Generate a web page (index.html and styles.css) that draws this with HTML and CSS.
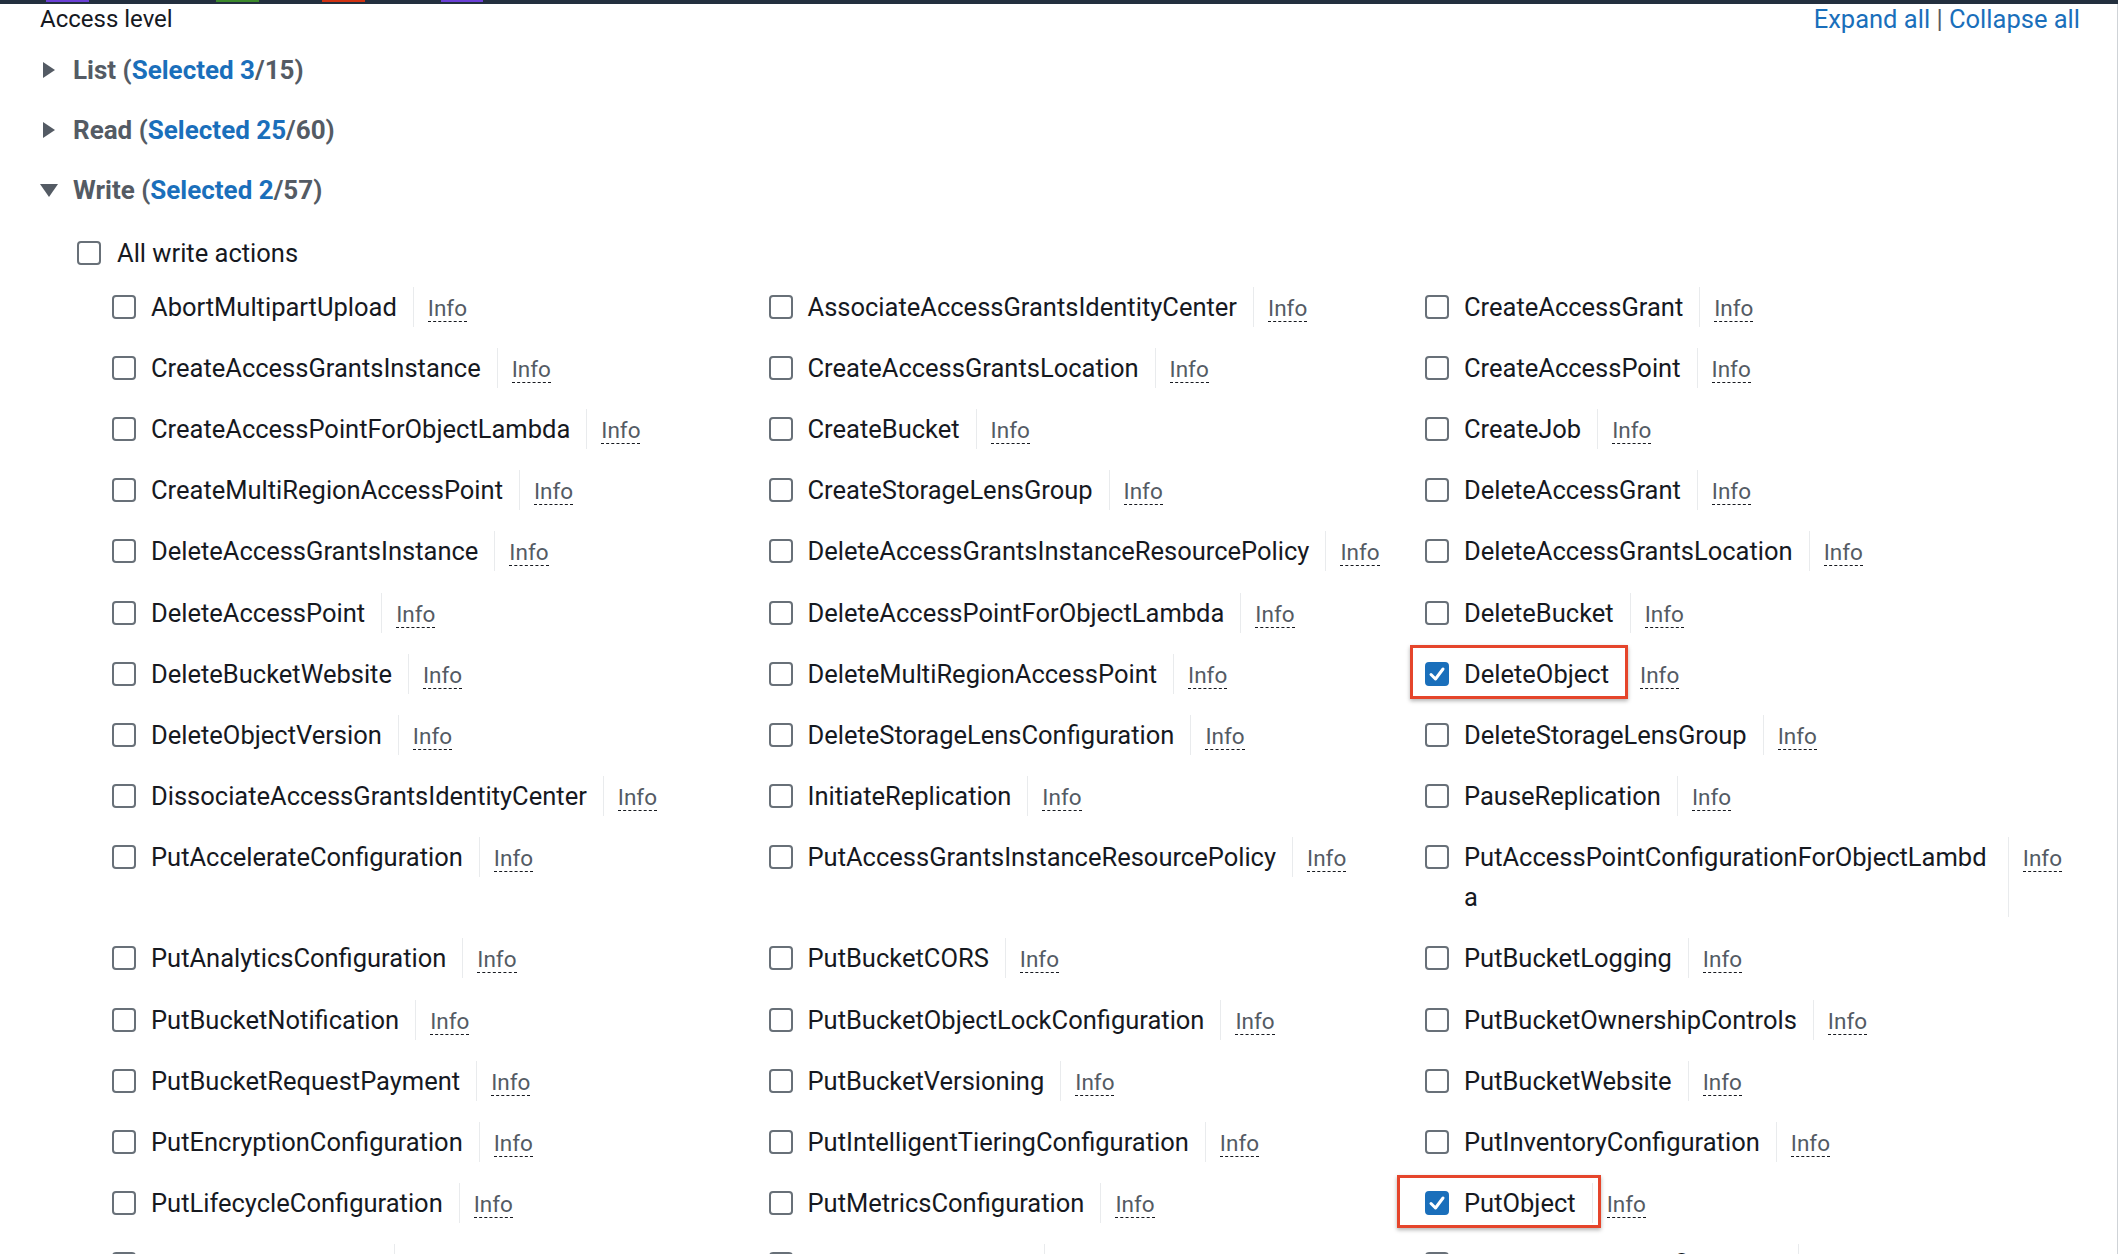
FILE: index.html
```html
<!DOCTYPE html>
<html lang="en">
<head>
<meta charset="utf-8">
<title>Access level</title>
<link rel="stylesheet" href="styles.css">
</head>
<body>
<div class="topbar">
  <span class="seg seg-a"></span><span class="seg seg-b"></span><span class="seg seg-c"></span><span class="seg seg-d"></span>
</div>
<div class="page">
  <div class="header">
    <span class="title">Access level</span>
    <span class="links"><a class="link">Expand all</a> <span class="pipe">|</span> <a class="link">Collapse all</a></span>
  </div>

  <div class="level first">
    <svg class="caret" width="18" height="18" viewBox="0 0 18 18"><polygon points="3,1 15,9 3,17" fill="#545b64"/></svg>
    <span>List (<span class="sel">Selected 3</span>/15)</span>
  </div>
  <div class="level">
    <svg class="caret" width="18" height="18" viewBox="0 0 18 18"><polygon points="3,1 15,9 3,17" fill="#545b64"/></svg>
    <span>Read (<span class="sel">Selected 25</span>/60)</span>
  </div>
  <div class="level">
    <svg class="caret" width="18" height="18" viewBox="0 0 18 18"><polygon points="0,3 18,3 9,16" fill="#545b64"/></svg>
    <span>Write (<span class="sel">Selected 2</span>/57)</span>
  </div>

  <div class="all">
    <span class="cb"></span>
    <span>All write actions</span>
  </div>

  <div class="grid" id="grid"></div>
</div>
<script src="app.js"></script>
</body>
</html>
```

FILE: app.js
```js
(function () {
  var actions = [
    "AbortMultipartUpload", "AssociateAccessGrantsIdentityCenter", "CreateAccessGrant",
    "CreateAccessGrantsInstance", "CreateAccessGrantsLocation", "CreateAccessPoint",
    "CreateAccessPointForObjectLambda", "CreateBucket", "CreateJob",
    "CreateMultiRegionAccessPoint", "CreateStorageLensGroup", "DeleteAccessGrant",
    "DeleteAccessGrantsInstance", "DeleteAccessGrantsInstanceResourcePolicy", "DeleteAccessGrantsLocation",
    "DeleteAccessPoint", "DeleteAccessPointForObjectLambda", "DeleteBucket",
    "DeleteBucketWebsite", "DeleteMultiRegionAccessPoint", "DeleteObject",
    "DeleteObjectVersion", "DeleteStorageLensConfiguration", "DeleteStorageLensGroup",
    "DissociateAccessGrantsIdentityCenter", "InitiateReplication", "PauseReplication",
    "PutAccelerateConfiguration", "PutAccessGrantsInstanceResourcePolicy", "PutAccessPointConfigurationForObjectLambda",
    "PutAnalyticsConfiguration", "PutBucketCORS", "PutBucketLogging",
    "PutBucketNotification", "PutBucketObjectLockConfiguration", "PutBucketOwnershipControls",
    "PutBucketRequestPayment", "PutBucketVersioning", "PutBucketWebsite",
    "PutEncryptionConfiguration", "PutIntelligentTieringConfiguration", "PutInventoryConfiguration",
    "PutLifecycleConfiguration", "PutMetricsConfiguration", "PutObject",
    "PutObjectLegalHold", "PutObjectRetention", "PutReplicationConfiguration"
  ];
  var marked = { "DeleteObject": "mark mark-a", "PutObject": "mark mark-b" };
  var check = '<svg width="20" height="20" viewBox="0 0 20 20"><polyline points="4,10.5 8.5,15 16,5" fill="none" stroke="#fff" stroke-width="3" stroke-linecap="round" stroke-linejoin="round"/></svg>';
  var grid = document.getElementById('grid');
  var html = '';
  actions.forEach(function (a) {
    var m = marked[a];
    html += '<div class="action"><span class="pick">' +
      (m ? '<span class="cb on">' + check + '</span>' : '<span class="cb"></span>') +
      '<span class="name">' + a + '</span>' +
      (m ? '<span class="' + m + '"></span>' : '') +
      '</span><span class="info"><span class="info-link">Info</span></span></div>';
  });
  grid.innerHTML = html;
})();
```

FILE: styles.css
```css
html, body {
  margin: 0;
  padding: 0;
  overflow: hidden;
  background: #ffffff;
}

body {
  font-family: Roboto, "Liberation Sans", sans-serif;
  color: #16191f;
}

.topbar {
  height: 4px;
  background: #232f3e;
  display: flex;
  align-items: flex-start;
}

.seg {
  height: 2px;
  width: 43px;
}
.seg-a { margin-left: 46px; background: #6b40d6; }
.seg-b { margin-left: 127px; background: #3d8a2b; }
.seg-c { margin-left: 63px; background: #d13212; }
.seg-d { margin-left: 76px; background: #6b40d6; width: 42px; }

.page {
  border-right: 1px solid #cfd3d7;
  height: 1250px;
  overflow: hidden;
}

.header {
  display: flex;
  justify-content: space-between;
  align-items: center;
  height: 30px;
  padding: 0 37px 0 40px;
}

.title {
  font-size: 24px;
  color: #16191f;
}

.links {
  font-size: 25.5px;
}

.link {
  color: #1a6fbb;
  text-decoration: none;
}

.pipe {
  color: #545b64;
}

.level {
  display: flex;
  align-items: center;
  gap: 15px;
  height: 60px;
  padding-left: 40px;
  font-size: 26px;
  font-weight: 700;
  color: #545b64;
}

.level.first {
  margin-top: 6px;
}

.caret {
  flex: none;
}

.sel {
  color: #1a6fbb;
}

.all {
  display: flex;
  gap: 16px;
  padding: 18px 0 18.6px 77px;
  font-size: 25.5px;
  line-height: 30px;
}

.all .cb {
  margin-top: 3px;
}

.cb {
  flex: none;
  box-sizing: border-box;
  width: 24px;
  height: 24px;
  margin-top: 8px;
  border: 2px solid #687078;
  border-radius: 4px;
  background: #ffffff;
  display: flex;
  align-items: center;
  justify-content: center;
}

.cb.on {
  background: #1a6fbb;
  border-color: #1a6fbb;
}

.grid {
  display: grid;
  grid-template-columns: repeat(3, 637px);
  align-items: start;
  column-gap: 19.5px;
  row-gap: 21.2px;
  padding-left: 112px;
}

.action {
  display: flex;
  align-items: flex-start;
  font-size: 25.5px;
  line-height: 40px;
  min-width: 0;
}

.pick {
  position: relative;
  display: flex;
  gap: 15px;
  min-width: 0;
}

.name {
  min-width: 0;
  overflow-wrap: anywhere;
}

.info {
  flex: none;
  align-self: stretch;
  margin-left: 16px;
  padding-left: 14px;
  border-left: 1px solid #e9ebed;
  font-size: 22.5px;
  color: #545b64;
}

.info-link {
  line-height: normal;
  vertical-align: -1px;
  border-bottom: 1px dashed #16191f;
}

.mark {
  position: absolute;
  z-index: 1;
  border: 3px solid #e5452b;
  box-shadow: 0 2px 4px rgba(0, 0, 0, 0.3);
  pointer-events: none;
}

.mark-a {
  left: -15px;
  right: -19px;
  top: -9px;
  bottom: -5px;
}

.mark-b {
  left: -28px;
  right: -25px;
  top: -8px;
  bottom: -5px;
}
```
